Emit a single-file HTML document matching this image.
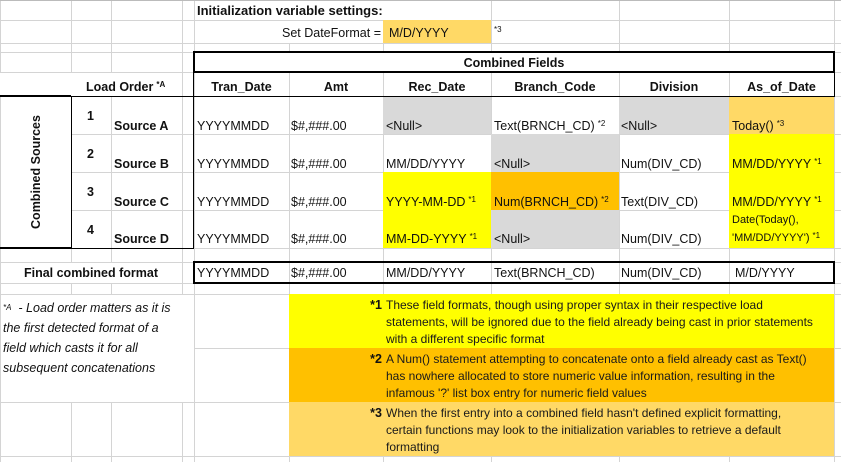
<!DOCTYPE html>
<html><head><meta charset="utf-8"><style>
*{margin:0;padding:0;box-sizing:border-box}
body{width:841px;height:462px;overflow:hidden;background:#fff;position:relative;font-family:"Liberation Sans",Arial,sans-serif;font-size:12.5px;color:#111}
div,span{position:absolute}
.v{width:1px;background:#d4d4d4}
.h{height:1px;background:#d4d4d4}
.w{background:#fff}
.b{font-weight:bold}
.t{white-space:nowrap;line-height:16px}
sup{font-size:8px;position:relative;top:-2px;vertical-align:top;margin-left:3px}
.c{text-align:center}
.n{white-space:nowrap;line-height:17px;font-size:12px;color:#1a1a1a}
</style></head><body>
<div class="v" style="left:0;top:0;height:462px"></div>
<div class="v" style="left:71px;top:0;height:462px"></div>
<div class="v" style="left:111px;top:0;height:462px"></div>
<div class="v" style="left:182px;top:0;height:462px"></div>
<div class="v" style="left:194px;top:0;height:462px"></div>
<div class="v" style="left:289px;top:0;height:462px"></div>
<div class="v" style="left:383px;top:0;height:462px"></div>
<div class="v" style="left:491px;top:0;height:462px"></div>
<div class="v" style="left:619px;top:0;height:462px"></div>
<div class="v" style="left:729px;top:0;height:462px"></div>
<div class="v" style="left:834px;top:0;height:462px"></div>
<div class="h" style="top:0;left:0;width:841px;background:#bbb"></div>
<div class="h" style="top:20px;left:0;width:841px"></div>
<div class="h" style="top:43px;left:0;width:841px"></div>
<div class="h" style="top:52px;left:0;width:841px"></div>
<div class="h" style="top:72px;left:0;width:841px"></div>
<div class="h" style="top:96px;left:0;width:841px"></div>
<div class="h" style="top:134px;left:0;width:841px"></div>
<div class="h" style="top:172px;left:0;width:841px"></div>
<div class="h" style="top:210px;left:0;width:841px"></div>
<div class="h" style="top:248px;left:0;width:841px"></div>
<div class="h" style="top:262px;left:0;width:841px"></div>
<div class="h" style="top:283px;left:0;width:841px"></div>
<div class="h" style="top:294px;left:0;width:841px"></div>
<div class="h" style="top:348px;left:194px;width:647px"></div>
<div class="h" style="top:402px;left:0;width:841px"></div>
<div class="h" style="top:456px;left:0;width:841px"></div>
<div class="w" style="left:195px;top:1px;width:296px;height:19px"></div>
<div class="w" style="left:195px;top:21px;width:188px;height:22px"></div>
<div class="w" style="left:0;top:73px;width:182px;height:23px"></div>
<div class="w" style="left:1px;top:97px;width:70px;height:151px"></div>
<div class="w" style="left:1px;top:263px;width:181px;height:20px"></div>
<div class="w" style="left:1px;top:295px;width:193px;height:107px"></div>
<div style="left:383px;top:20px;width:108px;height:23px;background:#ffd966"></div>
<div style="left:383px;top:97px;width:108px;height:37px;background:#d9d9d9"></div>
<div style="left:619px;top:97px;width:110px;height:37px;background:#d9d9d9"></div>
<div style="left:729px;top:97px;width:105px;height:37px;background:#ffd966"></div>
<div style="left:491px;top:134px;width:128px;height:38px;background:#d9d9d9"></div>
<div style="left:729px;top:134px;width:105px;height:114px;background:#ffff00"></div>
<div style="left:383px;top:172px;width:108px;height:76px;background:#ffff00"></div>
<div style="left:491px;top:172px;width:128px;height:38px;background:#ffc000"></div>
<div style="left:491px;top:210px;width:128px;height:38px;background:#d9d9d9"></div>
<div style="left:289px;top:294px;width:545px;height:54px;background:#ffff00"></div>
<div style="left:289px;top:348px;width:545px;height:54px;background:#ffc000"></div>
<div style="left:289px;top:402px;width:545px;height:54px;background:#ffd966"></div>
<div style="left:193px;top:51px;width:642px;height:22px;border:2px solid #000;background:#fff"></div>
<div style="left:193px;top:72px;width:1px;height:176px;background:#000"></div>
<div style="left:834px;top:72px;width:1px;height:24px;background:#000"></div>
<div style="left:193px;top:96px;width:642px;height:1px;background:#000"></div>
<div style="left:0;top:95px;width:71px;height:2px;background:#000"></div>
<div style="left:71px;top:96px;width:123px;height:1px;background:#000"></div>
<div style="left:71px;top:96px;width:1px;height:152px;background:#000"></div>
<div style="left:0;top:247px;width:71px;height:2px;background:#000"></div>
<div style="left:71px;top:248px;width:123px;height:1px;background:#000"></div>
<div style="left:193px;top:261px;width:642px;height:23px;border:2px solid #000"></div>
<span class="t b" style="left:197px;top:3px;font-size:13px">Initialization variable settings:</span>
<span class="t" style="left:195px;top:25px;width:186px;text-align:right">Set DateFormat =</span>
<span class="t" style="left:389px;top:25px">M/D/YYYY</span>
<span class="t" style="left:494px;top:22px;font-size:8px">*3</span>
<span class="t b c" style="left:194px;top:55px;width:640px">Combined Fields</span>
<span class="t b" style="left:86px;top:79px">Load Order<sup>*A</sup></span>
<span class="t b c" style="left:194px;top:79px;width:95px">Tran_Date</span>
<span class="t b c" style="left:289px;top:79px;width:94px">Amt</span>
<span class="t b c" style="left:383px;top:79px;width:108px">Rec_Date</span>
<span class="t b c" style="left:491px;top:79px;width:128px">Branch_Code</span>
<span class="t b c" style="left:619px;top:79px;width:110px">Division</span>
<span class="t b c" style="left:729px;top:79px;width:105px">As_of_Date</span>
<span class="t b" style="left:-22px;top:164px;width:116px;text-align:center;transform:rotate(-90deg)">Combined Sources</span>
<span class="t b" style="left:87px;top:108px">1</span><span class="t b" style="left:114px;top:118px">Source A</span>
<span class="t b" style="left:87px;top:146px">2</span><span class="t b" style="left:114px;top:156px">Source B</span>
<span class="t b" style="left:87px;top:184px">3</span><span class="t b" style="left:114px;top:194px">Source C</span>
<span class="t b" style="left:87px;top:222px">4</span><span class="t b" style="left:114px;top:231px">Source D</span>
<span class="t" style="left:197px;top:118px">YYYYMMDD</span><span class="t" style="left:291px;top:118px">$#,###.00</span><span class="t" style="left:386px;top:118px">&lt;Null&gt;</span><span class="t" style="left:494px;top:118px">Text(BRNCH_CD)<sup>*2</sup></span><span class="t" style="left:621px;top:118px">&lt;Null&gt;</span><span class="t" style="left:732px;top:118px">Today()<sup>*3</sup></span>
<span class="t" style="left:197px;top:156px">YYYYMMDD</span><span class="t" style="left:291px;top:156px">$#,###.00</span><span class="t" style="left:386px;top:156px">MM/DD/YYYY</span><span class="t" style="left:494px;top:156px">&lt;Null&gt;</span><span class="t" style="left:621px;top:156px">Num(DIV_CD)</span><span class="t" style="left:732px;top:156px">MM/DD/YYYY<sup>*1</sup></span>
<span class="t" style="left:197px;top:194px">YYYYMMDD</span><span class="t" style="left:291px;top:194px">$#,###.00</span><span class="t" style="left:386px;top:194px">YYYY-MM-DD<sup>*1</sup></span><span class="t" style="left:494px;top:194px">Num(BRNCH_CD)<sup>*2</sup></span><span class="t" style="left:621px;top:194px">Text(DIV_CD)</span><span class="t" style="left:732px;top:194px">MM/DD/YYYY<sup>*1</sup></span>
<span class="t" style="left:197px;top:231px">YYYYMMDD</span><span class="t" style="left:291px;top:231px">$#,###.00</span><span class="t" style="left:386px;top:231px">MM-DD-YYYY<sup>*1</sup></span><span class="t" style="left:494px;top:231px">&lt;Null&gt;</span><span class="t" style="left:621px;top:231px">Num(DIV_CD)</span>
<span class="t" style="left:732px;top:211px;font-size:11px;line-height:18px">Date(Today(),<br>'MM/DD/YYYY')<sup>*1</sup></span>
<span class="t b c" style="left:0;top:265px;width:182px">Final combined format</span>
<span class="t" style="left:197px;top:265px">YYYYMMDD</span><span class="t" style="left:291px;top:265px">$#,###.00</span><span class="t" style="left:386px;top:265px">MM/DD/YYYY</span><span class="t" style="left:494px;top:265px">Text(BRNCH_CD)</span><span class="t" style="left:621px;top:265px">Num(DIV_CD)</span><span class="t" style="left:735px;top:265px">M/D/YYYY</span>
<span style="left:3px;top:298px;white-space:nowrap;font-style:italic;font-size:12.5px;line-height:20px"><span style="position:relative;font-size:8px;vertical-align:top">*A</span>&nbsp; - Load order matters as it is<br>the first detected format of a<br>field which casts it for all<br>subsequent concatenations</span>
<span class="b" style="left:340px;top:297px;width:42px;text-align:right;line-height:17px">*1</span>
<span class="n" style="left:386px;top:297px">These field formats, though using proper syntax in their respective load<br>statements, will be ignored due to the field already being cast in prior statements<br>with a different specific format</span>
<span class="b" style="left:340px;top:351px;width:42px;text-align:right;line-height:17px">*2</span>
<span class="n" style="left:386px;top:351px">A Num() statement attempting to concatenate onto a field already cast as Text()<br>has nowhere allocated to store numeric value information, resulting in the<br>infamous '?' list box entry for numeric field values</span>
<span class="b" style="left:340px;top:405px;width:42px;text-align:right;line-height:17px">*3</span>
<span class="n" style="left:386px;top:405px">When the first entry into a combined field hasn't defined explicit formatting,<br>certain functions may look to the initialization variables to retrieve a default<br>formatting</span>
</body></html>
